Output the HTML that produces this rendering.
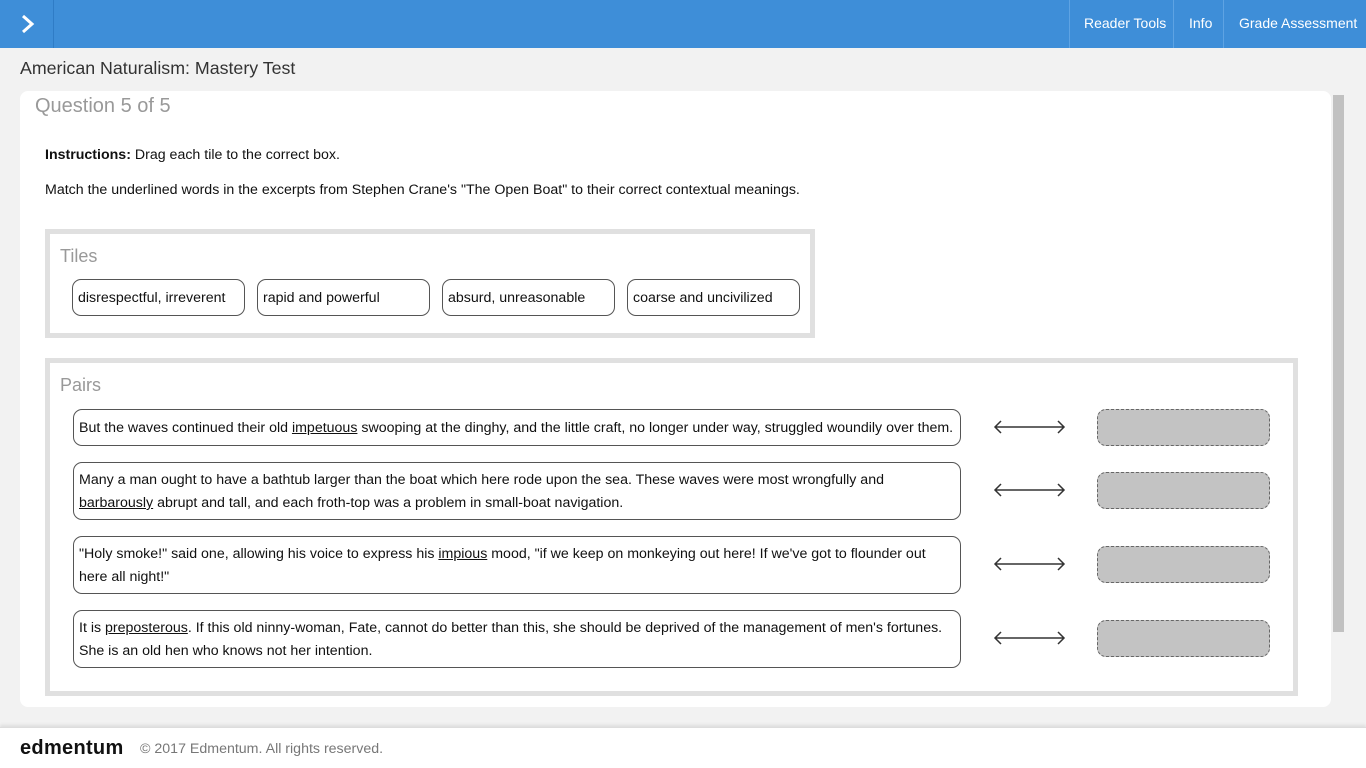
<!DOCTYPE html>
<html><head><style>
*{margin:0;padding:0;box-sizing:border-box}
body{width:1366px;height:768px;background:#f2f2f2;font-family:"Liberation Sans",sans-serif;position:relative;overflow:hidden;color:#111}
.a{position:absolute}
.top{left:0;top:0;width:1366px;height:48px;background:#3e8ed8}
.tb{top:0;height:48px;line-height:46px;color:#fff;font-size:14px;border-left:1px solid #5ea3e3;padding:0 15px;white-space:nowrap}
.tile{height:37px;width:173px;border:1px solid #555;border-radius:9px;font-size:14.2px;line-height:37px;padding-left:5px;background:#fff}
.row{left:73px;width:888px;border:1px solid #555;border-radius:9px;font-size:14.2px;line-height:23px;padding:4px 5px;background:#fff}
.drop{left:1097px;width:173px;height:37px;background:#c3c3c3;border:1px dashed #666;border-radius:9px}
u{text-decoration:underline}
</style></head><body>
<div class="a top"></div>
<div class="a" style="left:0;top:0;width:54px;height:48px;border-right:1px solid #2f7cc6"></div>
<svg class="a" style="left:18px;top:13px" width="20" height="22"><path d="M5 3 L14 11 L5 19" stroke="#fff" stroke-width="3" fill="none"/></svg>
<div class="a tb" style="left:1069px;width:104px;padding:0 14px">Reader Tools</div>
<div class="a tb" style="left:1173px;width:50px;padding:0 15px">Info</div>
<div class="a tb" style="left:1223px;width:143px;padding:0 15px">Grade Assessment</div>
<div class="a" style="left:20px;top:58px;font-size:17.8px;color:#333">American Naturalism: Mastery Test</div>
<div class="a" style="left:20px;top:91px;width:1311px;height:616px;background:#fff;border-radius:8px"></div>
<div class="a" style="left:1333px;top:95px;width:11px;height:537px;background:#c1c1c1"></div>
<div class="a" style="left:35px;top:95px;font-size:20px;color:#999">Question 5 of 5</div>
<div class="a" style="left:45px;top:147px;font-size:14.2px"><b>Instructions:</b> Drag each tile to the correct box.</div>
<div class="a" style="left:45px;top:182px;font-size:14.2px">Match the underlined words in the excerpts from Stephen Crane's "The Open Boat" to their correct contextual meanings.</div>
<div class="a" style="left:45px;top:229px;width:770px;height:109px;border:5px solid #e0e0e0"></div>
<div class="a" style="left:60px;top:246px;font-size:18px;color:#999">Tiles</div>
<div class="a tile" style="left:72px;top:279px">disrespectful, irreverent</div>
<div class="a tile" style="left:257px;top:279px">rapid and powerful</div>
<div class="a tile" style="left:442px;top:279px">absurd, unreasonable</div>
<div class="a tile" style="left:627px;top:279px">coarse and uncivilized</div>
<div class="a" style="left:45px;top:358px;width:1253px;height:338px;border:5px solid #e0e0e0"></div>
<div class="a" style="left:60px;top:375px;font-size:18px;color:#999">Pairs</div>
<div class="a row" style="top:409px;height:37px;line-height:27px;padding-top:5px">But the waves continued their old <u>impetuous</u> swooping at the dinghy, and the little craft, no longer under way, struggled woundily over them.</div>
<div class="a row" style="top:462px;height:58px;padding-top:6px">Many a man ought to have a bathtub larger than the boat which here rode upon the sea. These waves were most wrongfully and<br><u>barbarously</u> abrupt and tall, and each froth-top was a problem in small-boat navigation.</div>
<div class="a row" style="top:536px;height:58px;padding-top:6px">"Holy smoke!" said one, allowing his voice to express his <u>impious</u> mood, "if we keep on monkeying out here! If we've got to flounder out<br>here all night!"</div>
<div class="a row" style="top:610px;height:58px;padding-top:6px">It is <u>preposterous</u>. If this old ninny-woman, Fate, cannot do better than this, she should be deprived of the management of men's fortunes.<br>She is an old hen who knows not her intention.</div>
<svg class="a" style="left:0;top:0" width="1366" height="768">
<g stroke="#333" stroke-width="1.5" fill="none">
<path d="M995 427H1064M1001 421L995 427L1001 433M1058 421L1064 427L1058 433"/>
<path d="M995 490H1064M1001 484L995 490L1001 496M1058 484L1064 490L1058 496"/>
<path d="M995 564H1064M1001 558L995 564L1001 570M1058 558L1064 564L1058 570"/>
<path d="M995 638H1064M1001 632L995 638L1001 644M1058 632L1064 638L1058 644"/>
</g></svg>
<div class="a drop" style="top:409px"></div>
<div class="a drop" style="top:472px"></div>
<div class="a drop" style="top:546px"></div>
<div class="a drop" style="top:620px"></div>
<div class="a" style="left:0;top:727px;width:1366px;height:41px;background:#fff;border-top:1px solid #ddd;box-shadow:0 -2px 3px #ddd"></div>
<div class="a" style="left:20px;top:737px;font-size:20px;font-weight:bold;letter-spacing:0.3px;color:#111">edmentum</div>
<div class="a" style="left:140px;top:741px;font-size:14.2px;color:#777">© 2017 Edmentum. All rights reserved.</div>
</body></html>
